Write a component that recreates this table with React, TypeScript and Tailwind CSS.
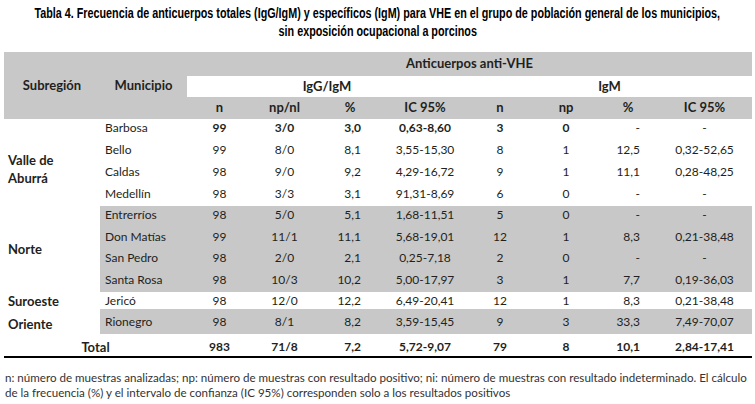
import React from 'react';

type Row = {
  sub?: string[];
  span?: number;
  subCls?: string;
  muni: string;
  vals: string[];
  h: string;
  bold?: boolean;
  gray?: boolean;
};

const rows: Row[] = [
  { sub: ['Valle de', 'Aburrá'], span: 4, subCls: 'pt-[13px] leading-[18px]', muni: 'Barbosa', vals: ['99', '3/0', '3,0', '0,63-8,60', '3', '0', '-', '-'], h: 'h-[21.75px] pb-[3px]', bold: true },
  { muni: 'Bello', vals: ['99', '8/0', '8,1', '3,55-15,30', '8', '1', '12,5', '0,32-52,65'], h: 'h-[21.75px] pb-[3px]' },
  { muni: 'Caldas', vals: ['98', '9/0', '9,2', '4,29-16,72', '9', '1', '11,1', '0,28-48,25'], h: 'h-[21.75px] pb-[3px]' },
  { muni: 'Medellín', vals: ['98', '3/3', '3,1', '91,31-8,69', '6', '0', '-', '-'], h: 'h-[21.75px] pb-[3px]' },
  { sub: ['Norte'], span: 4, subCls: 'leading-[14px]', muni: 'Entrerríos', vals: ['98', '5/0', '5,1', '1,68-11,51', '5', '0', '-', '-'], h: 'h-[21.5px] pb-[3px]', gray: true },
  { muni: 'Don Matías', vals: ['99', '11/1', '11,1', '5,68-19,01', '12', '1', '8,3', '0,21-38,48'], h: 'h-[21.5px] pb-[3px]', gray: true },
  { muni: 'San Pedro', vals: ['98', '2/0', '2,1', '0,25-7,18', '2', '0', '-', '-'], h: 'h-[21.5px] pb-[3px]', gray: true },
  { muni: 'Santa Rosa', vals: ['98', '10/3', '10,2', '5,00-17,97', '3', '1', '7,7', '0,19-36,03'], h: 'h-[21.5px] pb-[3px]', gray: true },
  { sub: ['Suroeste'], span: 1, subCls: 'leading-[14px]', muni: 'Jericó', vals: ['98', '12/0', '12,2', '6,49-20,41', '12', '1', '8,3', '0,21-38,48'], h: 'h-[17px]' },
  { sub: ['Oriente'], span: 1, subCls: 'leading-[14px] pt-[4px]', muni: 'Rionegro', vals: ['98', '8/1', '8,2', '3,59-15,45', '9', '3', '33,3', '7,49-70,07'], h: 'h-[25px]', gray: true },
];

// per data column alignment (IgG/IgM then IgM)
const valCls = [
  'text-center',
  'text-center',
  'text-right pr-[22px]',
  'text-center',
  'text-center',
  'text-center',
  'text-right pr-[17px]',
  'text-center',
];

const totals = ['983', '71/8', '7,2', '5,72-9,07', '79', '8', '10,1', '2,84-17,41'];

export default function App() {
  return (
    <div className="w-[755px] h-[404px] bg-white text-[#231f20] font-['Lato',sans-serif] overflow-hidden">
      {/* condensed bold title, squeezed horizontally since no condensed face is installed */}
      <h1 className="pt-[4px] flex flex-col items-center font-['Liberation_Sans',sans-serif] font-bold text-[14px] leading-[18px] text-black">
        <span className="whitespace-nowrap scale-x-[0.77]">
          Tabla 4. Frecuencia de anticuerpos totales (IgG/IgM) y específicos (IgM) para VHE en el grupo de población general de los municipios,
        </span>
        <span className="whitespace-nowrap scale-x-[0.77]">sin exposición ocupacional a porcinos</span>
      </h1>

      <table className="mt-[12px] ml-[4px] w-[748px] table-fixed border-collapse text-[12px]">
        <colgroup>
          <col className="w-[96px]" />
          <col className="w-[87px]" />
          <col className="w-[65px]" />
          <col className="w-[65px]" />
          <col className="w-[66px]" />
          <col className="w-[84px]" />
          <col className="w-[66px]" />
          <col className="w-[66px]" />
          <col className="w-[58px]" />
          <col className="w-[95px]" />
        </colgroup>
        <thead className="font-bold text-[13px]">
          <tr className="h-[24px] bg-[#c8c8c8]">
            <th rowSpan={3} className="align-middle text-center">Subregión</th>
            <th rowSpan={3} className="align-middle text-center">Municipio</th>
            <th colSpan={8} className="text-center">Anticuerpos anti-VHE</th>
          </tr>
          <tr className="h-[21px] bg-white">
            <th colSpan={4} className="text-center">IgG/IgM</th>
            <th colSpan={4} className="text-center">IgM</th>
          </tr>
          <tr className="h-[22px] bg-[#c8c8c8]">
            <th>n</th>
            <th>np/nl</th>
            <th>%</th>
            <th>IC 95%</th>
            <th>n</th>
            <th>np</th>
            <th>%</th>
            <th>IC 95%</th>
          </tr>
        </thead>
        <tbody className="leading-[14px]">
          {rows.map((r) => (
            <tr key={r.muni}>
              {r.sub && (
                <td rowSpan={r.span} className={`bg-white pl-[4px] align-middle font-bold text-[13px] ${r.subCls ?? ''}`}>
                  {r.sub.map((s) => (
                    <div key={s}>{s}</div>
                  ))}
                </td>
              )}
              <td className={`pl-[5px] ${r.h} ${r.gray ? 'bg-[#c8c8c8]' : ''}`}>{r.muni}</td>
              {r.vals.map((v, i) => (
                <td
                  key={i}
                  className={`${valCls[i]} ${r.h} ${r.gray ? 'bg-[#c8c8c8]' : ''} ${r.bold && v !== '-' ? 'font-bold' : ''}`}
                >
                  {v}
                </td>
              ))}
            </tr>
          ))}
          <tr className="h-[23px] font-bold border-b-2 border-black">
            <td colSpan={2} className="text-center text-[13px] pt-[3px]">Total</td>
            {totals.map((v, i) => (
              <td key={i} className={`${valCls[i]} pt-[3px]`}>
                {v}
              </td>
            ))}
          </tr>
        </tbody>
      </table>

      <p className="mt-[12px] pl-[5px] text-[11.6px] leading-[15px] text-[#333]">
        n: número de muestras analizadas; np: número de muestras con resultado positivo; ni: número de muestras con resultado indeterminado. El cálculo
        <br />
        de la frecuencia (%) y el intervalo de confianza (IC 95%) corresponden solo a los resultados positivos
      </p>
    </div>
  );
}
